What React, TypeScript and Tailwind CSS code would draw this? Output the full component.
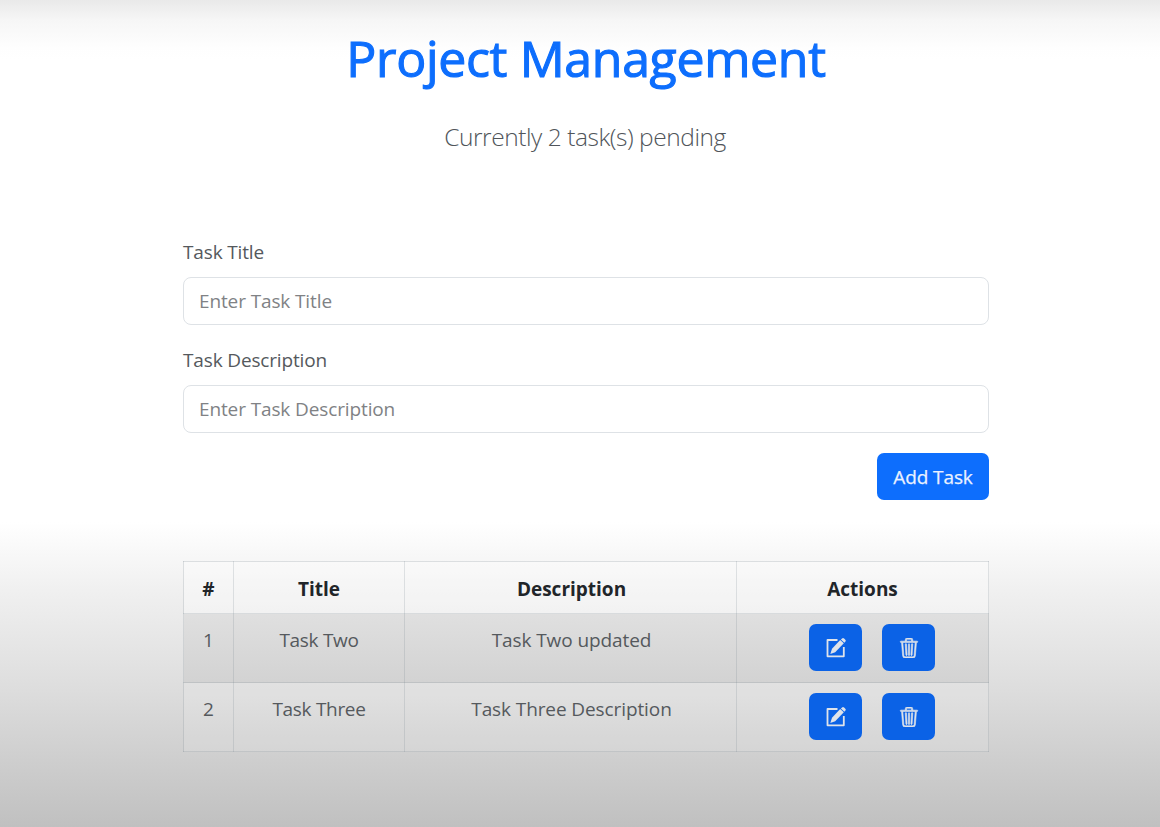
import { BsTrash3 } from "react-icons/bs";

type Task = { id: number; title: string; description: string };

const tasks: Task[] = [
  { id: 1, title: "Task Two", description: "Task Two updated" },
  { id: 2, title: "Task Three", description: "Task Three Description" },
];

function EditIcon() {
  return (
    <svg width="20" height="20" viewBox="0 0 20 20" fill="none">
      <path d="M11.5 2H1.5V18.3H17.8V9" stroke="currentColor" strokeWidth="1.8" strokeLinejoin="round" />
      <path d="M14.2 1.9L17.8 5.3L9.2 14.2L4.3 16L6 10.8Z" fill="currentColor" />
      <path d="M14.9 1.4L16.1 0.4Q17.1 -0.3 18.1 0.6L19.3 1.7Q20.2 2.7 19.4 3.6L18.4 4.8Z" fill="currentColor" />
    </svg>
  );
}

function Field({ label, placeholder }: { label: string; placeholder: string }) {
  return (
    <label className="block h-[108px]">
      <span className="block h-[40px] leading-[30px] tracking-[-0.15px]">{label}</span>
      <input
        type="text"
        placeholder={placeholder}
        className="block h-[48px] w-full rounded-[8px] border border-[#dee2e6] bg-white px-[15px] text-[19px] tracking-[-0.12px] placeholder:text-[#808285] placeholder:opacity-100"
      />
    </label>
  );
}

function TaskRow({ task }: { task: Task }) {
  const striped = task.id % 2 === 1;
  return (
    <tr className={striped ? "h-[69px] bg-black/5" : "h-[69px] bg-white/10"}>
      <td className="border border-[#73808a]/20 pt-[11px] align-top leading-[30px]">{task.id}</td>
      <td className="border border-[#73808a]/20 pt-[11px] align-top leading-[30px] tracking-[-0.3px]">{task.title}</td>
      <td className="border border-[#73808a]/20 pt-[11px] pl-[2px] align-top leading-[30px] tracking-[-0.1px]">{task.description}</td>
      <td className="border border-[#73808a]/20 pt-[10px] align-top">
        <div className="flex justify-center gap-[20px] pl-[19px]">
          <button className="flex h-[47px] w-[53px] items-center justify-center rounded-[7px] bg-[#0b62e6] pt-[1px] text-[#dfe3ea]">
            <EditIcon />
          </button>
          <button className="flex h-[47px] w-[53px] items-center justify-center rounded-[7px] bg-[#0b62e6] pt-[1px] text-[#dfe3ea]">
            <BsTrash3 size={20} strokeWidth={0.5} />
          </button>
        </div>
      </td>
    </tr>
  );
}

export default function App() {
  return (
    <div className="h-[827px] w-[1160px] overflow-hidden bg-[linear-gradient(to_bottom,#e9e9e9_0px,#f6f6f6_20px,#fefefe_48px,#ffffff_60px,#ffffff_522px,#f0f0f0_590px,#dddddd_690px,#c0c0c0_827px)] font-['Open_Sans','Noto_Sans',sans-serif] text-[19px] text-[#55595d]">
      <main className="ml-[183px] w-[806px]">
        <h1 className="h-[118px] pt-[28px] text-center text-[50px] leading-[60px] font-medium tracking-[-0.33px] text-[#0d6efd] [-webkit-text-stroke:1.1px_#0d6efd]">
          Project Management
        </h1>
        <p className="h-[119px] pr-[2px] text-center text-[24.5px] leading-[37px] font-light tracking-[-0.45px] text-[#50555a]">
          Currently 2 task(s) pending
        </p>
        <form>
          <Field label="Task Title" placeholder="Enter Task Title" />
          <Field label="Task Description" placeholder="Enter Task Description" />
          <div className="flex justify-end">
            <button
              type="button"
              className="h-[47px] w-[112px] rounded-[7px] bg-[#0d6efd] pt-[2px] text-[19px] tracking-[-0.1px] text-[#eaf1ff] [-webkit-text-stroke:0.25px_#eaf1ff]"
            >
              Add Task
            </button>
          </div>
        </form>
        <table className="mt-[61px] w-[805px] table-fixed border-collapse text-center">
          <colgroup>
            <col className="w-[50px]" />
            <col className="w-[171px]" />
            <col className="w-[332px]" />
            <col className="w-[252px]" />
          </colgroup>
          <thead>
            <tr className="h-[52px] bg-white/35 text-[#212529]">
              <th className="border border-[#73808a]/20 pt-[4px] font-bold">#</th>
              <th className="border border-[#73808a]/20 pt-[4px] font-bold">Title</th>
              <th className="border border-[#73808a]/20 pt-[4px] pl-[2px] font-bold">Description</th>
              <th className="border border-[#73808a]/20 pt-[4px] font-bold">Actions</th>
            </tr>
          </thead>
          <tbody>
            {tasks.map((task) => (
              <TaskRow key={task.id} task={task} />
            ))}
          </tbody>
        </table>
      </main>
    </div>
  );
}
